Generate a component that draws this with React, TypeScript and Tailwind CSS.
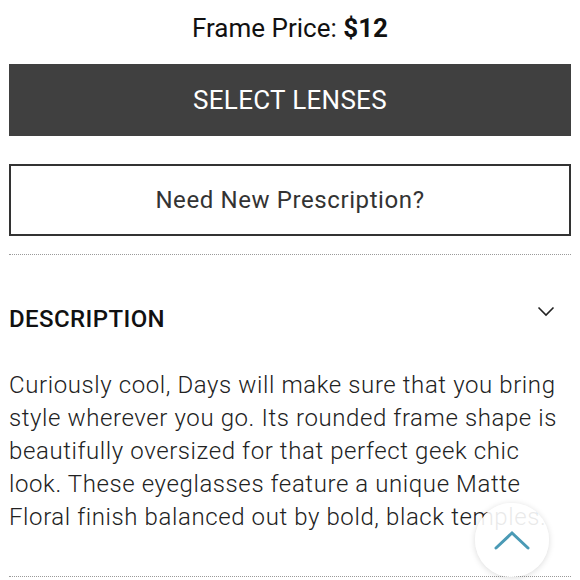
export default function App() {
  return (
    <div className="w-[580px] h-[580px] overflow-hidden bg-white font-['Roboto',sans-serif] relative">
      <div className="px-[9px]">
        <p className="text-center text-[26px] leading-[56px] text-[#111]">
          Frame Price: <span className="font-bold">$12</span>
        </p>
        <button className="mt-[8px] w-full h-[72px] bg-[#404040] text-white text-[26px] tracking-[0.3px]">
          SELECT LENSES
        </button>
        <button className="mt-[28px] w-full h-[72px] border-2 border-[#333] text-[#333] text-[24px] tracking-[0.6px]">
          Need New Prescription?
        </button>
        <div className="mt-[18px] border-t border-dotted border-[#9a9a9a]" />
        <div className="flex items-center justify-between h-[128px]">
          <h2 className="text-[24px] font-medium text-[#111] tracking-[0.4px]">DESCRIPTION</h2>
          <svg width="18" height="12" viewBox="0 0 18 12" className="mr-[16px] -mt-[16px]" fill="none" stroke="#222" strokeWidth="1.6">
            <path d="M1.5 2.5 L9 10 L16.5 2.5" />
          </svg>
        </div>
        <p className="text-[24px] leading-[33px] font-light text-[#222] tracking-[0.6px] -mt-[14px]">
          Curiously cool, Days will make sure that you bring style wherever you go. Its rounded frame shape is beautifully oversized for that perfect geek chic look. These eyeglasses feature a unique Matte Floral finish balanced out by bold, black temples.
        </p>
        <div className="mt-[42px] border-t border-dotted border-[#9a9a9a]" />
      </div>
      <button className="absolute left-[475px] top-[503px] w-[74px] h-[74px] rounded-full bg-white/90 shadow-[0_1px_6px_rgba(0,0,0,0.15)] flex items-center justify-center">
        <svg width="36" height="20" viewBox="0 0 36 20" fill="none" stroke="#4a9ab5" strokeWidth="3" strokeLinecap="round">
          <path d="M2 18 L18 3 L34 18" />
        </svg>
      </button>
    </div>
  );
}
